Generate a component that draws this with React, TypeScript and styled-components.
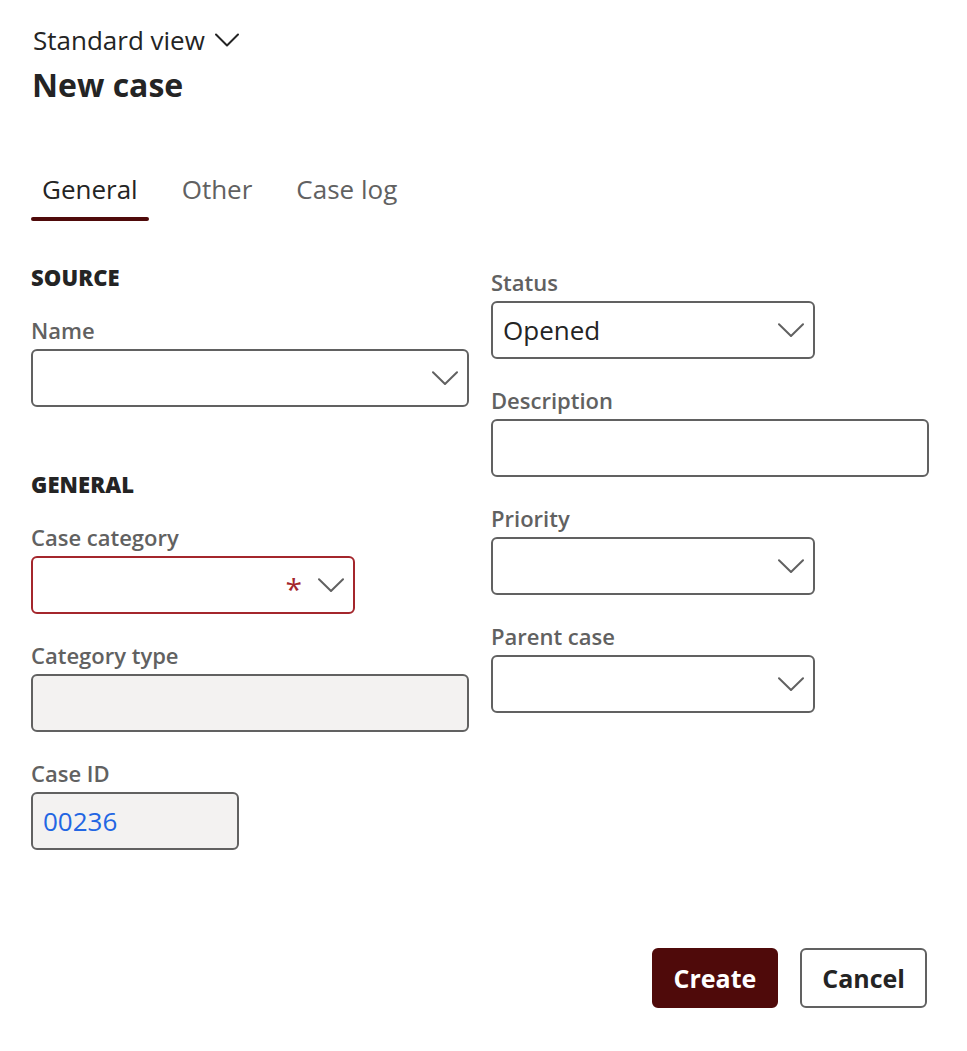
import React from "react";
import styled, { createGlobalStyle } from "styled-components";

const Global = createGlobalStyle`
  html, body { margin: 0; padding: 0; background: #ffffff; }
  body { font-family: "Open Sans", "Noto Sans", sans-serif; color: #242424; }
  * { box-sizing: border-box; }
`;

const Page = styled.div`
  padding: 22px 38px 0 31px;
  width: 967px;
  height: 1051px;
  display: flex;
  flex-direction: column;
`;

const ViewSwitcher = styled.div`
  display: flex;
  align-items: center;
  gap: 10px;
  padding-left: 2px;
  font-size: 26px;
  line-height: 36px;
  color: #242424;
`;

const Title = styled.h1`
  margin: 5px 0 0 1px;
  font-size: 32px;
  line-height: 44px;
  font-weight: 700;
  color: #242424;
`;

const TabList = styled.div`
  display: flex;
  gap: 22px;
  margin-top: 64px;
`;

const Tab = styled.div<{ $active?: boolean }>`
  position: relative;
  padding: 0 11px 14px;
  font-size: 26px;
  line-height: 36px;
  color: ${(p) => (p.$active ? "#242424" : "#616161")};
  &::after {
    content: "";
    display: ${(p) => (p.$active ? "block" : "none")};
    position: absolute;
    left: 0;
    right: 0;
    bottom: 0;
    height: 4px;
    border-radius: 2px;
    background: #4f0a0a;
  }
`;

const FormGrid = styled.div`
  display: grid;
  grid-template-columns: 438px 438px;
  column-gap: 22px;
  margin-top: 40px;
`;

const Column = styled.div<{ $offset?: number }>`
  display: flex;
  flex-direction: column;
  padding-top: ${(p) => p.$offset ?? 0}px;
`;

const Section = styled.section`
  display: flex;
  flex-direction: column;
  & + & {
    margin-top: 61px;
  }
`;

const SectionTitle = styled.h2`
  margin: 0 0 22px;
  padding-top: 2px;
  font-size: 22px;
  line-height: 28px;
  font-weight: 800;
  color: #242424;
  letter-spacing: 0.1px;
`;

const FieldStack = styled.div`
  display: flex;
  flex-direction: column;
  gap: 24px;
`;

const Field = styled.div<{ $width?: number }>`
  display: flex;
  flex-direction: column;
  width: ${(p) => (p.$width ? `${p.$width}px` : "100%")};
`;

const Label = styled.label`
  padding-top: 3px;
  font-size: 22px;
  line-height: 28px;
  font-weight: 600;
  color: #616161;
  margin-bottom: 5px;
`;

const Box = styled.div<{ $readonly?: boolean; $required?: boolean }>`
  height: 58px;
  display: flex;
  align-items: center;
  gap: 14px;
  padding: 0 9px 0 10px;
  border: 2px solid ${(p) => (p.$required ? "#a4262c" : "#616161")};
  border-radius: 6px;
  background: ${(p) => (p.$readonly ? "#f3f2f1" : "#ffffff")};
`;

const Value = styled.span<{ $link?: boolean }>`
  flex: 1;
  font-size: 26px;
  line-height: 34px;
  color: ${(p) => (p.$link ? "#2266e3" : "#242424")};
  white-space: nowrap;
`;

const Required = styled.span`
  color: #a4262c;
  font-size: 30px;
  line-height: 30px;
  height: 22px;
  margin-right: 2px;
`;

const Footer = styled.div`
  margin-top: auto;
  margin-bottom: 43px;
  display: flex;
  justify-content: flex-end;
  gap: 22px;
  padding-right: 2px;
`;

const Button = styled.button<{ $primary?: boolean }>`
  height: 60px;
  min-width: 125px;
  padding: 0 20px;
  border-radius: 6px;
  font-family: inherit;
  font-size: 25px;
  font-weight: 700;
  border: 2px solid ${(p) => (p.$primary ? "#4f0a0a" : "#616161")};
  background: ${(p) => (p.$primary ? "#4f0a0a" : "#ffffff")};
  color: ${(p) => (p.$primary ? "#ffffff" : "#242424")};
`;

const Chevron = ({ size = 26 }: { size?: number }) => (
  <svg width={size} height={size * 0.56} viewBox="0 0 26 14.5" fill="none">
    <path d="M1 1.2 L13 13 L25 1.2" stroke="#616161" strokeWidth="2" strokeLinecap="round" strokeLinejoin="round" />
  </svg>
);

const ViewChevron = () => (
  <svg width="24" height="14" viewBox="0 0 24 14" fill="none">
    <path d="M1 1.5 L12 12.5 L23 1.5" stroke="#242424" strokeWidth="2" strokeLinecap="round" strokeLinejoin="round" />
  </svg>
);

type FieldProps = {
  label: string;
  value?: string;
  dropdown?: boolean;
  readonly?: boolean;
  required?: boolean;
  link?: boolean;
  width?: number;
};

const FormField = ({ label, value, dropdown, readonly, required, link, width }: FieldProps) => (
  <Field $width={width}>
    <Label>{label}</Label>
    <Box $readonly={readonly} $required={required}>
      <Value $link={link}>{value ?? ""}</Value>
      {required && <Required>*</Required>}
      {dropdown && <Chevron />}
    </Box>
  </Field>
);

export default function App() {
  return (
    <>
      <Global />
      <Page>
        <ViewSwitcher>
          Standard view
          <ViewChevron />
        </ViewSwitcher>
        <Title>New case</Title>

        <TabList>
          <Tab $active>General</Tab>
          <Tab>Other</Tab>
          <Tab>Case log</Tab>
        </TabList>

        <FormGrid>
          <Column>
            <Section>
              <SectionTitle>SOURCE</SectionTitle>
              <FieldStack>
                <FormField label="Name" dropdown />
              </FieldStack>
            </Section>
            <Section>
              <SectionTitle>GENERAL</SectionTitle>
              <FieldStack>
                <FormField label="Case category" dropdown required width={324} />
                <FormField label="Category type" readonly />
                <FormField label="Case ID" value="00236" readonly link width={208} />
              </FieldStack>
            </Section>
          </Column>
          <Column $offset={4}>
            <FieldStack>
              <FormField label="Status" value="Opened" dropdown width={324} />
              <FormField label="Description" />
              <FormField label="Priority" dropdown width={324} />
              <FormField label="Parent case" dropdown width={324} />
            </FieldStack>
          </Column>
        </FormGrid>

        <Footer>
          <Button $primary>Create</Button>
          <Button>Cancel</Button>
        </Footer>
      </Page>
    </>
  );
}
